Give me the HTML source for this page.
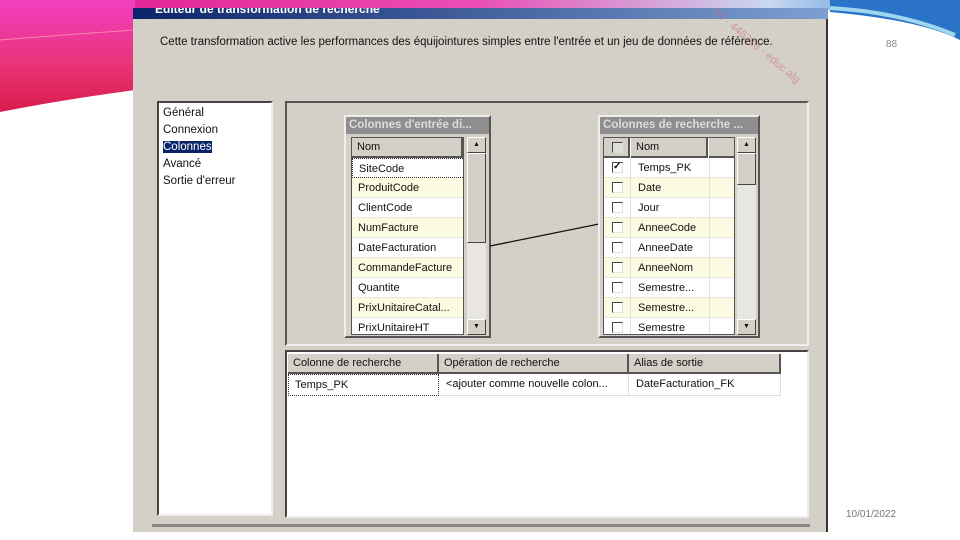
<!DOCTYPE html>
<html><head><meta charset="utf-8"><style>
*{margin:0;padding:0;box-sizing:border-box}
body{width:960px;height:540px;overflow:hidden;background:#fff;position:relative;font-family:"Liberation Sans",sans-serif;font-size:11px;color:#111}
.a{position:absolute}
.row{position:absolute;left:0;height:20px;line-height:20px;padding-left:6px;border-bottom:1px solid #e6e6e0}
.y{background:#fbfbe2}
.cb{position:absolute;width:11px;height:11px;border:1px solid #444;border-right-color:#ddd;border-bottom-color:#ddd;background:#fff}
.hd{background:#d4d0c8;border-right:2px solid #555;border-bottom:2px solid #555;height:20px;line-height:18px;padding-left:5px}
</style></head><body>
<svg class="a" style="left:0;top:0" width="960" height="120">
<defs><linearGradient id="g1" x1="0" x2="1"><stop offset="0" stop-color="#e0158a"/><stop offset=".5" stop-color="#ea4fb5"/><stop offset=".8" stop-color="#c8d8f0"/><stop offset="1" stop-color="#2a7fd0"/></linearGradient>
<linearGradient id="g2" x1="0" y1="0" x2="0" y2="1"><stop offset="0" stop-color="#f23fc0"/><stop offset=".6" stop-color="#e83276"/><stop offset="1" stop-color="#d81c4a"/></linearGradient></defs>
<path d="M0 0H960V10H0Z" fill="url(#g1)"/>
<path d="M0 0H135V90Q60 100 0 112Z" fill="url(#g2)"/>
<path d="M0 40Q60 35 135 30" stroke="#fbb" stroke-width="1" fill="none" opacity=".6"/>
<path d="M830 0H960V40Q920 20 830 12Z" fill="#2a73c8"/>
<path d="M830 8Q900 12 955 35" stroke="#9ed6ef" stroke-width="4" fill="none"/>
</svg>
<div class="a" style="left:133px;top:8px;width:695px;height:524px;background:#d4d0c8;border-right:2px solid #333"></div>
<div class="a" style="left:133px;top:8px;width:695px;height:11px;background:linear-gradient(90deg,#0a246a,#7d9fd0);overflow:hidden">
<div class="a" style="left:22px;top:-6px;color:#fff;font-weight:bold;font-size:12px">Éditeur de transformation de recherche</div></div>
<div class="a" style="left:160px;top:36px;font-size:11.5px">Cette transformation active les performances des équijointures simples entre l'entrée et un jeu de données de référence.</div>
<div class="a" style="left:718px;top:6px;color:#d06a6a;font-size:11px;transform:rotate(40deg);transform-origin:0 0;opacity:.55">03 · 446313 - educ alg</div>
<div class="a" style="left:886px;top:39px;color:#888;font-size:10px">88</div>
<div class="a" style="left:846px;top:509px;color:#777;font-size:10px">10/01/2022</div>
<div class="a" style="left:157px;top:101px;width:116px;height:415px;background:#fff;border:2px solid #444;border-right-color:#eee;border-bottom-color:#eee;padding:2px 4px;line-height:17px;font-size:11.5px">
Général<br>Connexion<br><span style="background:#0a246a;color:#fff">Colonnes</span><br>Avancé<br>Sortie d'erreur</div>
<div class="a" style="left:285px;top:101px;width:524px;height:245px;border:2px solid #555;border-right-color:#eee;border-bottom-color:#eee"></div>
<div class="a" style="left:285px;top:350px;width:524px;height:168px;background:#fff;border:2px solid #444;border-right-color:#eee;border-bottom-color:#eee"></div>
<div class="a" style="left:152px;top:524px;width:658px;height:3px;background:#888"></div>
<!-- left table -->
<div class="a" style="left:344px;top:115px;width:147px;height:223px;border:2px solid #eee;border-right-color:#555;border-bottom-color:#555;background:#d4d0c8">
<div style="height:17px;background:#8e8e8e;color:#ddd;font-weight:bold;line-height:17px;padding-left:3px;font-size:11.5px">Colonnes d'entrée di...</div>
<div class="a" style="left:5px;top:20px;width:113px;height:198px;background:#fff;overflow:hidden;border:1px solid #555">
<div class="hd">Nom</div>
<div class="row" style="top:20px;width:113px;border:1px dotted #333">SiteCode</div>
<div class="row y" style="top:40px;width:113px">ProduitCode</div>
<div class="row" style="top:60px;width:113px">ClientCode</div>
<div class="row y" style="top:80px;width:113px">NumFacture</div>
<div class="row" style="top:100px;width:113px">DateFacturation</div>
<div class="row y" style="top:120px;width:113px">CommandeFacture</div>
<div class="row" style="top:140px;width:113px">Quantite</div>
<div class="row y" style="top:160px;width:113px">PrixUnitaireCatal...</div>
<div class="row" style="top:180px;width:113px">PrixUnitaireHT</div>
</div>
<div class="a" style="left:121px;top:20px;width:19px;height:198px;background:#e8e6e0">
<div style="height:16px;background:#d4d0c8;border:1px solid #fff;border-right-color:#444;border-bottom-color:#444;text-align:center;font-size:7px;line-height:14px">▲</div>
<div style="height:90px;background:#d4d0c8;border:1px solid #fff;border-right-color:#444;border-bottom-color:#444"></div>
<div class="a" style="bottom:0;width:19px;height:16px;background:#d4d0c8;border:1px solid #fff;border-right-color:#444;border-bottom-color:#444;text-align:center;font-size:7px;line-height:14px">▼</div></div>
</div>
<svg class="a" style="left:489px;top:222px" width="112" height="26"><path d="M1 24L110 2" stroke="#111" stroke-width="1.3"/></svg>
<!-- right table -->
<div class="a" style="left:598px;top:115px;width:162px;height:223px;border:2px solid #eee;border-right-color:#555;border-bottom-color:#555;background:#d4d0c8">
<div style="height:17px;background:#8e8e8e;color:#ddd;font-weight:bold;line-height:17px;padding-left:3px;font-size:11.5px">Colonnes de recherche ...</div>
<div class="a" style="left:3px;top:20px;width:132px;height:198px;background:#fff;overflow:hidden;border:1px solid #555">
<div class="hd a" style="left:0;top:0;width:26px"></div><div class="hd a" style="left:27px;top:0;width:77px">Nom</div><div class="hd a" style="left:105px;top:0;width:27px"></div>
<div class="cb" style="left:8px;top:4px;background:#ddd"></div>
<div class="row" style="top:20px;width:132px;padding-left:34px">Temps_PK</div>
<div class="row y" style="top:40px;width:132px;padding-left:34px">Date</div>
<div class="row" style="top:60px;width:132px;padding-left:34px">Jour</div>
<div class="row y" style="top:80px;width:132px;padding-left:34px">AnneeCode</div>
<div class="row" style="top:100px;width:132px;padding-left:34px">AnneeDate</div>
<div class="row y" style="top:120px;width:132px;padding-left:34px">AnneeNom</div>
<div class="row" style="top:140px;width:132px;padding-left:34px">Semestre...</div>
<div class="row y" style="top:160px;width:132px;padding-left:34px">Semestre...</div>
<div class="row" style="top:180px;width:132px;padding-left:34px">Semestre</div>
<div class="a" style="left:26px;top:20px;width:1px;height:180px;background:#e0e0e0"></div>
<div class="a" style="left:105px;top:20px;width:1px;height:180px;background:#e0e0e0"></div>
<div class="cb" style="left:8px;top:24px;font-size:10px;line-height:8px;font-weight:bold">✓</div>
<div class="cb" style="left:8px;top:44px"></div><div class="cb" style="left:8px;top:64px"></div><div class="cb" style="left:8px;top:84px"></div><div class="cb" style="left:8px;top:104px"></div><div class="cb" style="left:8px;top:124px"></div><div class="cb" style="left:8px;top:144px"></div><div class="cb" style="left:8px;top:164px"></div><div class="cb" style="left:8px;top:184px"></div>
</div>
<div class="a" style="left:137px;top:20px;width:19px;height:198px;background:#e8e6e0">
<div style="height:16px;background:#d4d0c8;border:1px solid #fff;border-right-color:#444;border-bottom-color:#444;text-align:center;font-size:7px;line-height:14px">▲</div>
<div style="height:32px;background:#d4d0c8;border:1px solid #fff;border-right-color:#444;border-bottom-color:#444"></div>
<div class="a" style="bottom:0;width:19px;height:16px;background:#d4d0c8;border:1px solid #fff;border-right-color:#444;border-bottom-color:#444;text-align:center;font-size:7px;line-height:14px">▼</div></div>
</div>
<!-- bottom grid -->
<div class="hd a" style="left:288px;top:354px;width:151px">Colonne de recherche</div>
<div class="hd a" style="left:439px;top:354px;width:190px">Opération de recherche</div>
<div class="hd a" style="left:629px;top:354px;width:152px">Alias de sortie</div>
<div class="a" style="left:288px;top:374px;width:151px;height:22px;line-height:20px;padding-left:6px;border:1px dotted #333">Temps_PK</div>
<div class="a" style="left:439px;top:374px;width:190px;height:22px;line-height:20px;padding-left:7px;border-bottom:1px solid #ddd;border-right:1px solid #ddd">&lt;ajouter comme nouvelle colon...</div>
<div class="a" style="left:629px;top:374px;width:152px;height:22px;line-height:20px;padding-left:7px;border-bottom:1px solid #ddd;border-right:1px solid #ddd">DateFacturation_FK</div>
</body></html>
